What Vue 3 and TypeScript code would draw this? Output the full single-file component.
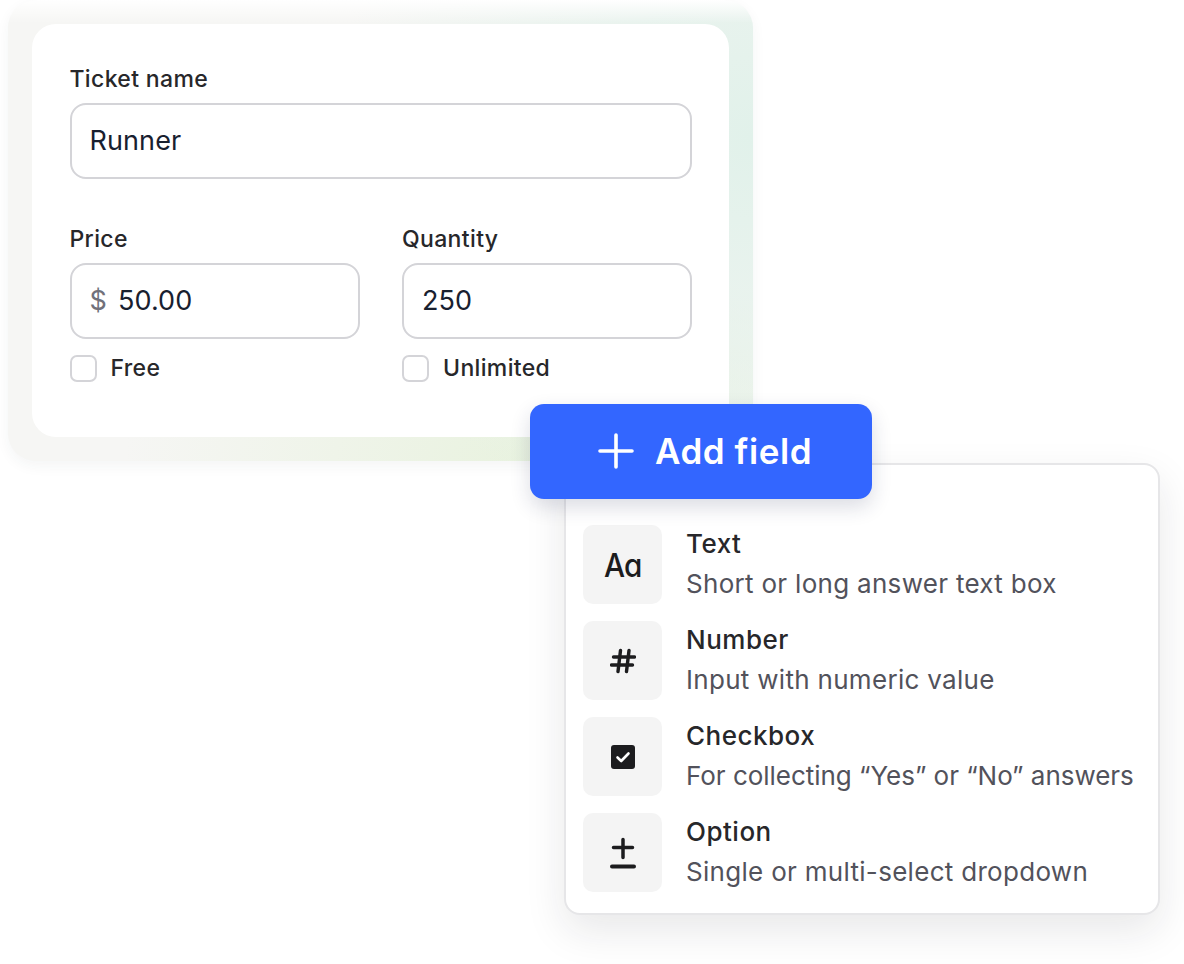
<script setup lang="ts">
interface FieldType {
  title: string
  desc: string
  icon: string
}

const fieldTypes: FieldType[] = [
  { title: 'Text', desc: 'Short or long answer text box', icon: 'text' },
  { title: 'Number', desc: 'Input with numeric value', icon: 'number' },
  { title: 'Checkbox', desc: 'For collecting “Yes” or “No” answers', icon: 'checkbox' },
  { title: 'Option', desc: 'Single or multi-select dropdown', icon: 'option' },
]
</script>

<template>
  <div class="page">
    <div class="frame">
      <div class="card">
        <label class="label">Ticket name</label>
        <div class="input">Runner</div>

        <div class="columns">
          <div class="column">
            <label class="label">Price</label>
            <div class="input"><span class="prefix">$</span>50.00</div>
            <div class="check"><span class="box"></span>Free</div>
          </div>
          <div class="column">
            <label class="label">Quantity</label>
            <div class="input">250</div>
            <div class="check"><span class="box"></span>Unlimited</div>
          </div>
        </div>
      </div>
    </div>

    <div class="menu">
      <div v-for="item in fieldTypes" :key="item.title" class="row">
        <div class="icon">
          <span v-if="item.icon === 'text'" class="aa">Aa</span>
          <svg v-else-if="item.icon === 'number'" width="26" height="26" viewBox="0 0 26 26" fill="none" stroke="#1c1c1e" stroke-width="3.4" stroke-linecap="round">
            <path d="M3.500 9h21M1.500 17h21M10.500 2.500 8 23.500M19 2.500l-2.500 21" />
          </svg>
          <svg v-else-if="item.icon === 'checkbox'" width="24" height="24" viewBox="0 0 24 24" fill="none">
            <rect width="24" height="24" rx="3" fill="#1c1c1e" />
            <path d="m6.500 12.500 3.700 3.500 7.300-7.500" stroke="#fff" stroke-width="2.600" stroke-linecap="round" stroke-linejoin="round" />
          </svg>
          <svg v-else width="26" height="32" viewBox="0 0 26 32" fill="none" stroke="#1c1c1e" stroke-linecap="round">
            <path d="M13 2.500v18M3.500 10.500h19" stroke-width="3.500" />
            <path d="M2 29.500h22" stroke-width="4" />
          </svg>
        </div>
        <div class="copy">
          <div class="title">{{ item.title }}</div>
          <div class="desc" :class="{ tight: item.icon === 'checkbox' }">{{ item.desc }}</div>
        </div>
      </div>
    </div>

    <button class="add">
      <svg width="36" height="36" viewBox="0 0 36 36" fill="none" stroke="#fff" stroke-width="3.600" stroke-linecap="round">
        <path d="M18 2v32M2 18h32" />
      </svg>
      Add field
    </button>
  </div>
</template>

<style>
body {
  background: #fff;
}
</style>

<style scoped>
.page {
  position: relative;
  width: 1184px;
  height: 964px;
  overflow: hidden;
  font-family: Inter, "Noto Sans", sans-serif;
  color: #27272a;
}

.frame {
  width: 745px;
  height: 461px;
  box-sizing: border-box;
  margin-left: 8px;
  padding: 24px;
  border-radius: 28px;
  background:
    linear-gradient(180deg, #fff 0%, rgba(255, 255, 255, 0) 5%),
    radial-gradient(420px 420px at 100% 30%, #e1f1ea 0%, rgba(225, 241, 234, 0) 100%),
    radial-gradient(420px 200px at 72% 100%, #e8f2de 0%, rgba(232, 242, 222, 0) 100%),
    #f6f6f4;
  box-shadow: 0 5px 14px rgba(40, 50, 60, 0.05);
}

.card {
  height: 413px;
  box-sizing: border-box;
  padding: 42px 37px 0 37.5px;
  border-radius: 24px;
  background: #fff;
}

.label {
  display: block;
  height: 26px;
  margin-bottom: 10.5px;
  font-size: 23px;
  font-weight: 500;
  line-height: 26px;
  letter-spacing: 0.35px;
}

.input {
  display: flex;
  align-items: center;
  height: 76px;
  box-sizing: border-box;
  padding: 0 18px;
  border: 2px solid #d4d4d8;
  border-radius: 16px;
  font-size: 27px;
  color: #18202f;
  letter-spacing: 0.1px;
}

.prefix {
  margin-right: 11px;
  color: #71717a;
}

.columns {
  display: grid;
  grid-template-columns: 290px 290px;
  gap: 42.5px;
  margin-top: 47.5px;
}

.check {
  display: flex;
  align-items: center;
  gap: 14px;
  margin-top: 15.5px;
  font-size: 23px;
  font-weight: 500;
  letter-spacing: 0.35px;
}

.box {
  width: 27px;
  height: 27px;
  box-sizing: border-box;
  border: 2px solid #d4d4d8;
  border-radius: 7px;
}

.menu {
  position: absolute;
  left: 564px;
  top: 463px;
  width: 596px;
  height: 452px;
  box-sizing: border-box;
  display: flex;
  flex-direction: column;
  gap: 17px;
  padding: 60px 17px 0;
  border: 2px solid #e6e6e8;
  border-radius: 16px;
  background: #fff;
  box-shadow: 0 16px 40px rgba(30, 30, 40, 0.1);
}

.row {
  display: flex;
  gap: 24px;
  height: 79px;
}

.icon {
  display: flex;
  align-items: center;
  justify-content: center;
  flex: none;
  width: 79px;
  height: 79px;
  border-radius: 10px;
  background: #f4f4f4;
}

.aa {
  display: inline-block;
  font-size: 33px;
  font-weight: 500;
  color: #1c1c1e;
  font-feature-settings: "cv11";
  letter-spacing: -1px;
  transform: scaleX(0.9);
}

.title {
  margin-top: 1px;
  font-size: 26px;
  font-weight: 500;
  line-height: 36px;
  letter-spacing: 0.5px;
}

.desc {
  margin-top: 4px;
  font-size: 26px;
  line-height: 36px;
  color: #52525b;
  letter-spacing: 0.3px;
  white-space: nowrap;
}

.desc.tight {
  letter-spacing: -0.03px;
}

.add {
  position: absolute;
  left: 530px;
  top: 404px;
  display: flex;
  align-items: center;
  justify-content: center;
  gap: 21px;
  width: 342px;
  height: 95px;
  padding: 0 0 2px 8px;
  border: 0;
  border-radius: 14px;
  background: #3366ff;
  box-shadow: 0 8px 20px rgba(30, 40, 80, 0.16);
  font-family: inherit;
  font-size: 35px;
  font-weight: 600;
  letter-spacing: 0.55px;
  color: #fff;
}
</style>
